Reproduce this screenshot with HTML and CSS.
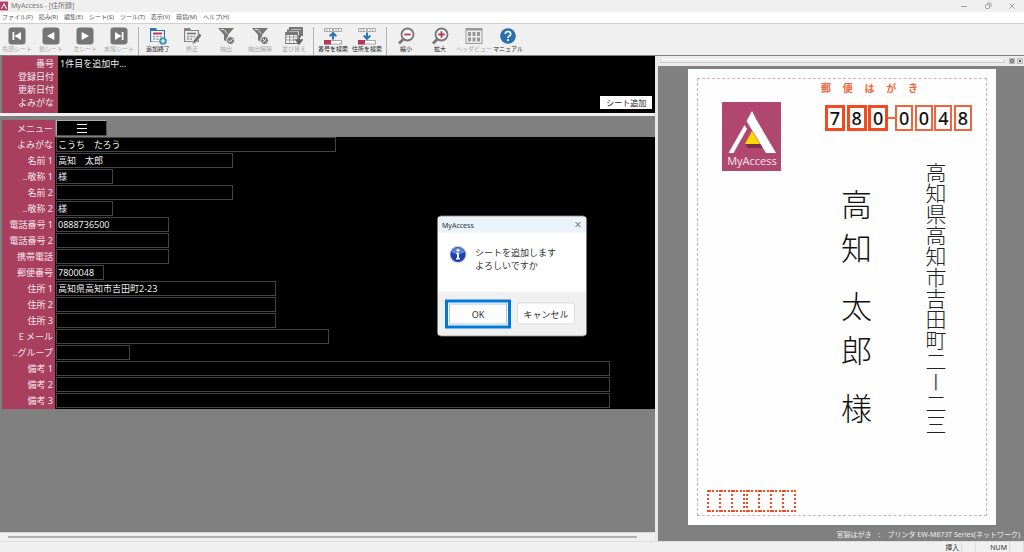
FILE: index.html
```
<!DOCTYPE html>
<html lang="ja">
<head>
    <meta charset="UTF-8">
    <meta name="viewport" content="width=device-width, initial-scale=1.0">
    <title>MyAccess - [住所録]</title>
    <link rel="stylesheet" href="styles.css">
</head>
<body>
    <!-- タイトルバー -->
    <header class="titlebar">
        <svg class="app-icon" viewBox="0 0 9 10"><rect width="9" height="10" fill="#b0416a"/><path d="M1 8L4.6 1.5L8.2 8H6.6L4.4 4L2.2 8z" fill="#fff"/></svg>
        <span class="title">MyAccess - [住所録]</span>
        <div class="window-buttons">
            <button aria-label="最小化"><svg viewBox="0 0 8 8"><path d="M1 4.5H7"/></svg></button>
            <button aria-label="元に戻す"><svg viewBox="0 0 8 8"><rect x="1.5" y="2.5" width="4" height="4" rx="1"/><path d="M3 1H6Q7 1 7 2V5"/></svg></button>
            <button aria-label="閉じる"><svg viewBox="0 0 8 8"><path d="M1.5 1.5L6.5 6.5M6.5 1.5L1.5 6.5"/></svg></button>
        </div>
    </header>

    <!-- メニュー -->
    <nav class="menubar">
        <a href="#">ファイル(F)</a>
        <a href="#">読み(R)</a>
        <a href="#">編集(E)</a>
        <a href="#">シート(S)</a>
        <a href="#">ツール(T)</a>
        <a href="#">表示(V)</a>
        <a href="#">環境(M)</a>
        <a href="#">ヘルプ(H)</a>
    </nav>

    <!-- ツールバー -->
    <div class="toolbar">
        <button class="tool off"><svg viewBox="0 0 18 18"><rect x="0.5" y="0.5" width="17" height="17" rx="3" fill="#757575"/><path d="M4.5 5h1.8v8H4.5zM13 5v8L6.5 9z" fill="#fff"/></svg><span>先頭シート</span></button>
        <button class="tool off"><svg viewBox="0 0 18 18"><rect x="0.5" y="0.5" width="17" height="17" rx="3" fill="#757575"/><path d="M12.3 5v8L5 9z" fill="#fff"/></svg><span>前シート</span></button>
        <button class="tool off"><svg viewBox="0 0 18 18"><rect x="0.5" y="0.5" width="17" height="17" rx="3" fill="#757575"/><path d="M5.7 5v8L13 9z" fill="#fff"/></svg><span>次シート</span></button>
        <button class="tool off"><svg viewBox="0 0 18 18"><rect x="0.5" y="0.5" width="17" height="17" rx="3" fill="#757575"/><path d="M11.7 5h1.8v8h-1.8zM5 5v8l6.5-4z" fill="#fff"/></svg><span>末尾シート</span></button>
        <i class="sep"></i>
        <button class="tool"><svg viewBox="0 0 18 18"><path d="M1 1h6l1 2h8v12H1z" fill="#2f72b5"/><rect x="2.2" y="4" width="12.6" height="10.5" fill="#fff"/><path d="M4 6.5h9" stroke="#b8375f" stroke-width="2"/><path d="M4 9.5h9M4 12h6" stroke="#999" stroke-width="1.5" stroke-dasharray="2.3 1"/><circle cx="14" cy="14" r="3.8" fill="#3e93a9"/><path d="M14 11.8v4.4M11.8 14h4.4" stroke="#fff" stroke-width="1.2"/></svg><span>追加終了</span></button>
        <button class="tool off"><svg viewBox="0 0 18 18"><path d="M1 1h6l1 2h8v12H1z" fill="#858585"/><rect x="2.2" y="4" width="12.6" height="10" fill="#eee"/><path d="M4 6.5h9" stroke="#777" stroke-width="1.6"/><path d="M4 9.5h8M4 12h5" stroke="#999" stroke-width="1.5" stroke-dasharray="2.3 1"/><path d="M16.5 6L10.500 13.500l-1.500 4L13 15.500L18.500 8.500z" fill="#707070" stroke="#f0f0f0" stroke-width="0.5"/></svg><span>修正</span></button>
        <button class="tool off"><svg viewBox="0 0 18 18"><path d="M1 1h16l-6 7v8L7 13V8z" fill="#777"/><path d="M4 2.500h3l3 4" fill="none" stroke="#ddd"/><circle cx="13.500" cy="13.500" r="4" fill="#777" stroke="#f0f0f0"/><path d="M11.800 13.500l1.300 1.400 2.400-2.700" fill="none" stroke="#fff"/></svg><span>抽出</span></button>
        <button class="tool off"><svg viewBox="0 0 18 18"><path d="M1 1h16l-6 7v8L7 13V8z" fill="#777"/><path d="M4 2.500h3l3 4" fill="none" stroke="#ddd"/><circle cx="13.500" cy="13.500" r="4" fill="#777" stroke="#f0f0f0"/><path d="M12 12l3 3M15 12l-3 3" stroke="#fff"/></svg><span>抽出解除</span></button>
        <button class="tool off"><svg viewBox="0 0 18 18"><path d="M5 3V1h12v8M3 5.500V3.500h12v7" fill="none" stroke="#777" stroke-width="2"/><rect x="0.700" y="5.500" width="12" height="11" fill="#fff" stroke="#777"/><path d="M1 7h12" stroke="#777" stroke-width="2"/><path d="M1 10h11M1 13h11M4.700 8v8M8.700 8v8" stroke="#999"/><path d="M14 8v7M11 13l3 4 3-4z" fill="#666" stroke="#666" stroke-width="1.500"/></svg><span>並び替え</span></button>
        <i class="sep"></i>
        <button class="tool"><svg viewBox="0 0 18 18"><path d="M0.500 1.500h8v3h-8zM9.500 1.500h8v3h-8zM3 1.500v3M5.500 1.500v3M12 1.500v3M14.500 1.500v3" fill="#fff" stroke="#999" stroke-width="0.800"/><path d="M9 12.500V7" stroke="#2876b9" stroke-width="2"/><path d="M5.700 9.200L9 6l3.300 3.200" fill="none" stroke="#2876b9" stroke-width="2"/><rect x="0.500" y="13.500" width="17" height="3.500" fill="#fff" stroke="#aaa"/><path d="M0 13h7v4.500H0z" fill="#b8375f"/></svg><span>番号を検索</span></button>
        <button class="tool"><svg viewBox="0 0 18 18"><path d="M0.500 1.500h8v3h-8zM9.500 1.500h8v3h-8zM3 1.500v3M5.500 1.500v3M12 1.500v3M14.500 1.500v3" fill="#fff" stroke="#999" stroke-width="0.800"/><path d="M9 5.500v6" stroke="#2876b9" stroke-width="2"/><path d="M5.700 8.500L9 11.800l3.300-3.300" fill="none" stroke="#2876b9" stroke-width="2"/><rect x="0.500" y="13.500" width="17" height="3.500" fill="#fff" stroke="#aaa"/><path d="M0 13h7v4.500H0z" fill="#b8375f"/></svg><span>住所を検索</span></button>
        <i class="sep"></i>
        <button class="tool"><svg viewBox="0 0 18 18"><circle cx="10.500" cy="7.500" r="6" fill="#f7f7f7" stroke="#777" stroke-width="1.800"/><path d="M6.500 12L2 16.500" stroke="#777" stroke-width="2.800"/><path d="M7.300 7.500h6.400" stroke="#b8375f" stroke-width="1.800"/></svg><span>縮小</span></button>
        <button class="tool"><svg viewBox="0 0 18 18"><circle cx="10.500" cy="7.500" r="6" fill="#f7f7f7" stroke="#777" stroke-width="1.800"/><path d="M6.500 12L2 16.500" stroke="#777" stroke-width="2.800"/><path d="M7.300 7.500h6.400M10.500 4.300v6.400" stroke="#b8375f" stroke-width="1.800"/></svg><span>拡大</span></button>
        <button class="tool off"><svg viewBox="0 0 18 18"><rect x="1" y="1.500" width="16" height="15" fill="#eee" stroke="#999"/><path d="M1 2.500h16" stroke="#999" stroke-width="2"/><path d="M3 7h12M3 12.500h12" stroke="#999" stroke-width="4" stroke-dasharray="3 1.500"/></svg><span>ヘッダビュー</span></button>
        <button class="tool"><svg viewBox="0 0 18 18"><circle cx="9" cy="9" r="7.800" fill="#2a6fb0"/><path d="M6.300 7Q6.300 4.500 9 4.500T11.700 7Q11.700 8.300 10.200 9.100 9 9.800 9 11" fill="none" stroke="#fff" stroke-width="1.700"/><circle cx="9" cy="13.200" r="1.100" fill="#fff"/></svg><span>マニュアル</span></button>
    </div>

    <main class="workspace">
        <section class="left-pane">
            <!-- シート情報 -->
            <div class="sheet-head">
                <dl class="info">
                    <dt>番号</dt><dd>1件目を追加中...</dd>
                    <dt>登録日付</dt><dd></dd>
                    <dt>更新日付</dt><dd></dd>
                    <dt>よみがな</dt><dd></dd>
                </dl>
                <button class="add-sheet">シート追加</button>
            </div>

            <!-- 入力フォーム -->
            <form class="sheet-form">
                <div class="row menu-row">
                    <label for="menu">メニュー</label>
                    <div class="cell"><button type="button" id="menu" class="menu-button"><svg viewBox="0 0 12 10"><path d="M1 1.500h10M1 5.500h10M1 9.500h10" stroke="#fff"/></svg></button></div>
                </div>
                <div class="row"><label for="yomi">よみがな</label><div class="cell"><input id="yomi" class="w-yomi" value="こうち　たろう"></div></div>
                <div class="row"><label for="name1">名前 1</label><div class="cell"><input id="name1" class="w-name" value="高知　太郎"></div></div>
                <div class="row"><label for="title1">..敬称 1</label><div class="cell"><input id="title1" class="w-title" value="様"></div></div>
                <div class="row"><label for="name2">名前 2</label><div class="cell"><input id="name2" class="w-name"></div></div>
                <div class="row"><label for="title2">..敬称 2</label><div class="cell"><input id="title2" class="w-title" value="様"></div></div>
                <div class="row"><label for="tel1">電話番号 1</label><div class="cell"><input id="tel1" class="w-tel" value="0888736500"></div></div>
                <div class="row"><label for="tel2">電話番号 2</label><div class="cell"><input id="tel2" class="w-tel"></div></div>
                <div class="row"><label for="mobile">携帯電話</label><div class="cell"><input id="mobile" class="w-tel"></div></div>
                <div class="row"><label for="zip">郵便番号</label><div class="cell"><input id="zip" class="w-zip" value="7800048"></div></div>
                <div class="row"><label for="addr1">住所 1</label><div class="cell"><input id="addr1" class="w-addr" value="高知県高知市吉田町2-23"></div></div>
                <div class="row"><label for="addr2">住所 2</label><div class="cell"><input id="addr2" class="w-addr"></div></div>
                <div class="row"><label for="addr3">住所 3</label><div class="cell"><input id="addr3" class="w-addr"></div></div>
                <div class="row"><label for="email">E メール</label><div class="cell"><input id="email" class="w-email"></div></div>
                <div class="row"><label for="group">..グループ</label><div class="cell"><input id="group" class="w-group"></div></div>
                <div class="row"><label for="note1">備考 1</label><div class="cell"><input id="note1" class="w-note"></div></div>
                <div class="row"><label for="note2">備考 2</label><div class="cell"><input id="note2" class="w-note"></div></div>
                <div class="row"><label for="note3">備考 3</label><div class="cell"><input id="note3" class="w-note"></div></div>
            </form>
            <div class="scrollbar"><div class="thumb"></div></div>
        </section>

        <!-- はがきプレビュー -->
        <section class="right-pane">
            <div class="pane-bar">
                <div class="grip"></div>
                <button aria-label="フロート"><svg viewBox="0 0 5 5"><rect x="1" y="1" width="3" height="3" fill="none" stroke="#222"/></svg></button>
                <button aria-label="閉じる"><svg viewBox="0 0 5 5"><path d="M1 1l3 3M4 1L1 4" stroke="#222"/></svg></button>
            </div>
            <div class="preview">
                <div class="postcard">
                    <div class="print-area">
                        <svg class="logo" viewBox="0 0 59 69">
                            <rect width="59" height="69" fill="#b0476e"/>
                            <path d="M30 29L38 42H23z" fill="#ffd800"/>
                            <path d="M23 42h16l3 4H26z" fill="#7d2d4c"/>
                            <path d="M30 9L24.500 19 44 51H54L34 17z" fill="#fff"/>
                            <path d="M22.500 23L25 27 11.500 51H6.500z" fill="#fff"/>
                            <text x="30" y="63" text-anchor="middle" class="logo-text">MyAccess</text>
                        </svg>
                        <div class="zip-block">
                            <div class="card-title"><span>郵</span><span>便</span><span>は</span><span>が</span><span>き</span></div>
                            <div class="zip">
                                <b class="thick">7</b><b class="thick">8</b><b class="thick">0</b><i></i><b>0</b><b>0</b><b>4</b><b>8</b>
                            </div>
                        </div>
                        <div class="addressee">
                            <div class="part"><span>高</span><span>知</span></div>
                            <div class="part"><span>太</span><span>郎</span></div>
                            <div class="part"><span>様</span></div>
                        </div>
                        <div class="address">高知県高知市吉田町二ー二三</div>
                        <div class="sender-zip">
                            <div class="boxes"><i></i><i></i><i></i></div>
                            <div class="boxes"><i></i><i></i><i></i><i></i></div>
                        </div>
                    </div>
                </div>
            </div>
            <div class="printer">官製はがき　:　プリンタ EW-M873T Series(ネットワーク)</div>
        </section>
    </main>

    <footer class="statusbar"><span>挿入</span><span></span><span>NUM</span><span></span></footer>

    <!-- 確認ダイアログ -->
    <div class="dialog" role="dialog" aria-labelledby="dialogTitle">
        <div class="dialog-title">
            <span id="dialogTitle">MyAccess</span>
            <button aria-label="閉じる"><svg viewBox="0 0 8 8"><path d="M1.500 1.500l5 5M6.500 1.500l-5 5" stroke="#333" stroke-width="0.800"/></svg></button>
        </div>
        <div class="dialog-body">
            <svg class="info-icon" viewBox="0 0 18 18"><circle cx="9" cy="9" r="8.500" fill="#c3c8d2"/><circle cx="9" cy="9" r="7.500" fill="#1b40b5"/><path d="M2.500 7a6.700 6.700 0 0 1 13 0Q9 10 2.500 7z" fill="#5b80d8"/><circle cx="9" cy="4.800" r="1.400" fill="#fff"/><path d="M7 7.300h3v5.200h1V14H7v-1.500h1V8.500H7z" fill="#fff"/></svg>
            <p>シートを追加します<br>よろしいですか</p>
        </div>
        <div class="dialog-buttons">
            <button class="ok">OK</button>
            <button class="cancel">キャンセル</button>
        </div>
    </div>
</body>
</html>
```
FILE: styles.css
```
* {
    box-sizing: border-box;
}

body {
    display: flex;
    flex-direction: column;
    height: 100vh;
    margin: 0;
    overflow: hidden;
    background-color: #f0f0f0;
    color: #333;
    font-family: "Noto Sans", "Noto Sans CJK JP", sans-serif;
    font-size: 9px;
}

button {
    padding: 0;
    border: 0;
    background: none;
    color: inherit;
    font: inherit;
}

svg {
    display: block;
}

/* タイトルバー */
.titlebar {
    display: flex;
    align-items: center;
    height: 12px;
    flex: none;
    color: #777;
    font-size: 7px;
    line-height: 12px;
}

.app-icon {
    width: 8px;
    height: 10px;
    margin-right: 3px;
}

.title {
    flex: 1;
}

.window-buttons {
    display: flex;
    gap: 16px;
    padding-right: 8px;
}

.window-buttons svg {
    width: 8px;
    height: 8px;
    fill: none;
    stroke: #888;
    stroke-width: 0.8;
}

/* メニュー */
.menubar {
    display: flex;
    align-items: center;
    gap: 6px;
    height: 11px;
    flex: none;
    padding-left: 2px;
    background-color: white;
    font-size: 6px;
    line-height: 11px;
}

.menubar a {
    color: #555;
    text-decoration: none;
}

/* ツールバー */
.toolbar {
    display: flex;
    height: 33px;
    flex: none;
    padding-top: 3px;
    border-top: 1px solid #d0d0d0;
    border-bottom: 1px solid #808080;
}

.tool {
    display: flex;
    flex-direction: column;
    align-items: center;
    width: 34px;
    color: #222;
    font-size: 6px;
    line-height: 9px;
    white-space: nowrap;
}

.tool.off {
    color: #a8a8a8;
}

.tool svg {
    width: 18px;
    height: 18px;
}

.sep {
    width: 1px;
    margin: 0 2px;
    height: 28px;
    background-color: #b4b4b4;
}

/* 作業領域 */
.workspace {
    display: flex;
    flex: 1;
    min-height: 0;
}

.left-pane {
    display: flex;
    flex-direction: column;
    width: 64%;
    background-color: #808080;
}

.sheet-head {
    display: flex;
    align-items: flex-end;
    padding: 0 3px 0 2px;
    height: 57px;
    background: linear-gradient(to right, #808080 2px, #a83f5f 2px, #a83f5f 58px, #000 58px);
    color: #eee;
}

.info {
    display: grid;
    grid-template-columns: 52px 1fr;
    grid-auto-rows: 13px;
    column-gap: 6px;
    flex: 1;
    align-self: flex-start;
    margin: 1px 0 0;
    font-size: 9px;
    line-height: 14px;
}

.info dt {
    text-align: right;
}

.info dd {
    margin: 0;
}

.add-sheet {
    width: 52px;
    height: 13px;
    margin-bottom: 4px;
    background-color: white;
    color: #222;
    font-size: 8px;
    line-height: 13px;
}

.sheet-form {
    flex: 1;
    padding: 4px 0 0 2px;
    border-top: 3px solid #f0f0f0;
}

.row {
    display: flex;
    height: 16px;
}

.row label {
    width: 53px;
    padding-right: 2px;
    background-color: #a83f5f;
    color: #f5e4e9;
    text-align: right;
    line-height: 16px;
}

.cell {
    flex: 1;
    padding-left: 1px;
    background-color: black;
}

.cell input {
    display: block;
    height: 15px;
    padding: 0 1px;
    border: 1px solid #444;
    border-radius: 0;
    outline: 0;
    background-color: black;
    color: #eee;
    font: inherit;
}

.menu-row {
    height: 17px;
}

.menu-row label {
    line-height: 18px;
}

.menu-row .cell {
    background-color: #808080;
}

.menu-button {
    display: flex;
    justify-content: center;
    align-items: center;
    width: 51px;
    height: 16px;
    border: 1px solid #aaa;
    border-right-color: #555;
    border-bottom-color: #555;
    background-color: black;
}

.menu-button svg {
    width: 12px;
    height: 10px;
}

.w-yomi { width: 280px; }
.w-name { width: 177px; }
.w-title { width: 57px; }
.w-tel { width: 113px; }
.w-zip { width: 48px; }
.w-addr { width: 220px; }
.w-email { width: 273px; }
.w-group { width: 74px; }
.w-note { width: 554px; }

.scrollbar {
    height: 9px;
    padding: 3px 18px 0 8px;
    background-color: #f0f0f0;
    border-top: 1px solid #d8d8d8;
}

.thumb {
    height: 2px;
    background-color: #b0b0b0;
}

/* プレビュー */
.right-pane {
    display: flex;
    flex-direction: column;
    flex: 1;
    border-left: 3px solid #e8e8e8;
    background-color: #808080;
}

.pane-bar {
    display: flex;
    align-items: center;
    gap: 2px;
    height: 10px;
    padding: 0 1px 0 2px;
    background-color: #ececec;
}

.grip {
    flex: 1;
    height: 4px;
    margin-right: 2px;
    border: 1px solid #d0d0d0;
    border-top-color: white;
}

.pane-bar button {
    border: 1px solid #bbb;
}

.pane-bar svg {
    width: 4px;
    height: 4px;
}

.preview {
    display: flex;
    flex: 1;
    padding: 3px 28px 0 30px;
}

.postcard {
    flex: 1;
    padding: 9px;
    margin-bottom: 3px;
    background-color: #fefefe;
}

.print-area {
    display: grid;
    grid-template-columns: 1fr 32px 52px 21px 40px;
    grid-template-rows: 83px 1fr 30px;
    height: 100%;
    border: 1px dashed #e0aabd;
}

.logo {
    grid-column: 1;
    grid-row: 1 / 3;
    width: 59px;
    height: 69px;
    margin: 23px 0 0 24px;
}

.logo-text {
    fill: #f6e3ea;
    font-family: "Open Sans", sans-serif;
    font-size: 11px;
}

.zip-block {
    grid-column: 1 / -1;
    grid-row: 1;
    justify-self: end;
    width: 147px;
    margin-right: 14px;
}

.card-title {
    display: flex;
    justify-content: space-between;
    width: 97px;
    margin-left: -4px;
    margin-top: 2px;
    color: #f4633c;
    font-size: 10px;
    font-weight: bold;
    line-height: 14px;
}

.zip {
    display: flex;
    justify-content: space-between;
    align-items: center;
    margin-top: 10px;
}

.zip b {
    width: 18px;
    height: 26px;
    border: 2px solid #f4633c;
    color: #111;
    font-size: 18px;
    font-weight: 500;
    line-height: 23px;
    text-align: center;
}

.zip .thick {
    width: 20px;
    border: 3px solid #f44a20;
    line-height: 21px;
}

.zip i {
    width: 8px;
    height: 2px;
    margin: 0 -2px;
    background-color: #f4633c;
}

.addressee {
    display: flex;
    flex-direction: column;
    gap: 27px;
    grid-column: 2;
    grid-row: 2;
    margin-top: 25px;
    color: #111;
    font-family: "Noto Sans CJK JP", sans-serif;
    font-size: 31px;
    font-weight: 300;
    line-height: 31px;
}

.part {
    display: flex;
    flex-direction: column;
    gap: 13px;
}

.address {
    grid-column: 4;
    grid-row: 2;
    color: #222;
    font-family: "Noto Sans CJK JP", sans-serif;
    font-size: 21px;
    font-weight: 300;
    line-height: 21px;
    white-space: nowrap;
    writing-mode: vertical-rl;
}

.sender-zip {
    display: flex;
    gap: 1px;
    grid-column: 1 / -1;
    grid-row: 3;
    align-self: start;
    padding: 5px 0 0 9px;
}

.boxes {
    display: flex;
    border-left: 2px dotted #f44a20;
}

.boxes i {
    width: 12px;
    height: 22px;
    border: 2px dotted #f44a20;
    border-left: 0;
}

.printer {
    height: 13px;
    padding-right: 4px;
    color: #eee;
    font-size: 7px;
    line-height: 13px;
    text-align: right;
}

/* ステータスバー */
.statusbar {
    display: flex;
    justify-content: flex-end;
    height: 11px;
    flex: none;
    border-top: 1px solid #ddd;
    font-size: 7px;
    line-height: 11px;
}

.statusbar span {
    min-width: 14px;
    padding: 0 2px;
    border-right: 1px solid #ddd;
}

.statusbar span:nth-child(3) {
    padding-left: 14px;
}

/* ダイアログ */
.dialog {
    position: absolute;
    top: 50%;
    left: 50%;
    width: 150px;
    transform: translate(-50%, -50%);
    border: 1px solid #777;
    border-radius: 4px;
    overflow: hidden;
    background-color: white;
}

.dialog-title {
    display: flex;
    justify-content: space-between;
    align-items: center;
    height: 16px;
    padding: 0 4px;
    background-color: #eaf2fa;
    font-size: 7px;
}

.dialog-title svg {
    width: 8px;
    height: 8px;
}

.dialog-body {
    display: flex;
    gap: 8px;
    height: 59px;
    padding: 13px 11px;
}

.info-icon {
    width: 18px;
    height: 18px;
}

.dialog-body p {
    margin: 0;
    font-size: 9px;
    line-height: 13px;
    white-space: nowrap;
}

.dialog-buttons {
    display: flex;
    align-items: center;
    gap: 6px;
    height: 44px;
    padding: 0 7px;
    background-color: #f0f0f0;
}

.ok {
    width: 66px;
    height: 29px;
    border: 3px solid #0078d7;
    outline: 1px solid #a9cdeb;
    outline-offset: -5px;
    background-color: #fdfdfd;
}

.cancel {
    width: 58px;
    height: 22px;
    border: 1px solid #ddd;
    border-radius: 2px;
    background-color: #fdfdfd;
}
```
